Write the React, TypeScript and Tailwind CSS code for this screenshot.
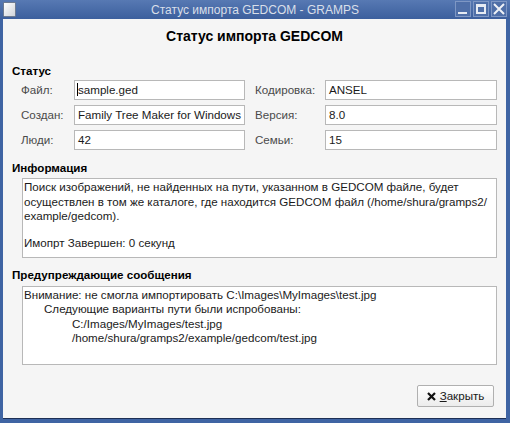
import React from "react";

const font = { fontFamily: '"Liberation Sans", Arial, sans-serif' };

const lbl = "text-[11.6px] text-[#4a4a4a] leading-[20px] h-[20px] whitespace-nowrap";
const inp = "h-[20px] border border-[#b8b8b8] bg-white text-[11.6px] text-[#1a1a1a] leading-[18px] pl-[3px] whitespace-nowrap overflow-hidden";

export default function App() {
  return (
    <div className="w-[510px] h-[423px] bg-[#3f64a3] flex flex-col" style={font}>
      {/* Title bar */}
      <div className="h-[19px] relative flex items-center justify-center bg-gradient-to-b from-[#5779b3] to-[#3c5f9d]">
        <div className="absolute left-[3px] top-[2px] w-[13px] h-[15px] bg-gradient-to-br from-white to-[#cfd3da] border border-[#6d7a90] rounded-[1px]" />
        <span className="text-[12px] text-[#d9dfe9] leading-none">Статус импорта GEDCOM - GRAMPS</span>
        <div className="absolute right-[3px] top-[1px] flex gap-[2px]">
          <div className="w-[16px] h-[16px] bg-[#4f6fa8] border border-[#7e97c4] relative">
            <div className="absolute left-[2px] right-[3px] bottom-[2px] h-[2px] bg-[#e6ebf3]" />
          </div>
          <div className="w-[16px] h-[16px] bg-[#4f6fa8] border border-[#7e97c4] relative">
            <div className="absolute inset-[2px] border-[2px] border-t-[3px] border-[#e6ebf3]" />
          </div>
          <div className="w-[16px] h-[16px] bg-[#4f6fa8] border border-[#7e97c4] flex items-center justify-center">
            <svg width="12" height="12" viewBox="0 0 12 12">
              <path d="M1 1 L11 11 M11 1 L1 11" stroke="#eef1f6" strokeWidth="2" />
            </svg>
          </div>
        </div>
      </div>
      {/* Body */}
      <div className="flex-1 ml-[3px] mr-[4px] mb-[4px] border-b border-[#1d2f55] bg-[#f5f5f5] flex flex-col pl-[9px] pr-[9px]">
        <div className="text-center font-bold text-[14px] text-black leading-[17px] mt-[9px]">Статус импорта GEDCOM</div>

        <div className="font-bold text-[11.6px] text-black leading-[15px] mt-[18px]">Статус</div>
        <div className="grid grid-cols-[53px_171px_80px_172px] gap-y-[5px] mt-[2px] ml-[9px] items-start">
          <div className={lbl}>Файл:</div>
          <div className={inp}><span className="border-l border-black -ml-[1px]">sample.ged</span></div>
          <div className={lbl + " pl-[10px]"}>Кодировка:</div>
          <div className={inp}>ANSEL</div>

          <div className={lbl}>Создан:</div>
          <div className={inp}>Family Tree Maker for Windows</div>
          <div className={lbl + " pl-[10px]"}>Версия:</div>
          <div className={inp}>8.0</div>

          <div className={lbl}>Люди:</div>
          <div className={inp}>42</div>
          <div className={lbl + " pl-[10px]"}>Семьи:</div>
          <div className={inp}>15</div>
        </div>

        <div className="font-bold text-[11.6px] text-black leading-[15px] mt-[10px]">Информация</div>
        <div className="ml-[10px] mt-[3px] h-[80px] w-[475px] border border-[#b8b8b8] bg-white text-[11.6px] text-[#1a1a1a] leading-[14.5px] pl-[1px] pt-[1px] whitespace-nowrap">
          <div>Поиск изображений, не найденных на пути, указанном в GEDCOM файле, будет</div>
          <div>осуществлен в том же каталоге, где находится GEDCOM файл (/home/shura/gramps2/</div>
          <div>example/gedcom).</div>
          <div className="h-[12px]" />
          <div>Имопрт Завершен: 0 секунд</div>
        </div>

        <div className="font-bold text-[11.6px] text-black leading-[15px] mt-[9px]">Предупреждающие сообщения</div>
        <div className="ml-[10px] mt-[4px] h-[79px] w-[475px] border border-[#b8b8b8] bg-white text-[11.6px] text-[#1a1a1a] leading-[14.3px] pl-[1px] pt-[1px] whitespace-nowrap">
          <div>Внимание: не смогла импортировать C:\Images\MyImages\test.jpg</div>
          <div className="pl-[20px]">Следующие варианты пути были испробованы:</div>
          <div className="pl-[48px]">C:/Images/MyImages/test.jpg</div>
          <div className="pl-[48px]">/home/shura/gramps2/example/gedcom/test.jpg</div>
        </div>

        <div className="flex justify-end mt-[20px] pr-[3px]">
          <div className="w-[77px] h-[22px] border border-[#b0b0b0] rounded-[2px] bg-gradient-to-b from-white to-[#ececec] flex items-center justify-center gap-[4px] text-[11.6px] text-[#1a1a1a]">
            <svg width="9" height="9" viewBox="0 0 9 9">
              <path d="M1 1 L8 8 M8 1 L1 8" stroke="#111" strokeWidth="2.2" />
            </svg>
            <span><span className="underline">З</span>акрыть</span>
          </div>
        </div>
      </div>
    </div>
  );
}
